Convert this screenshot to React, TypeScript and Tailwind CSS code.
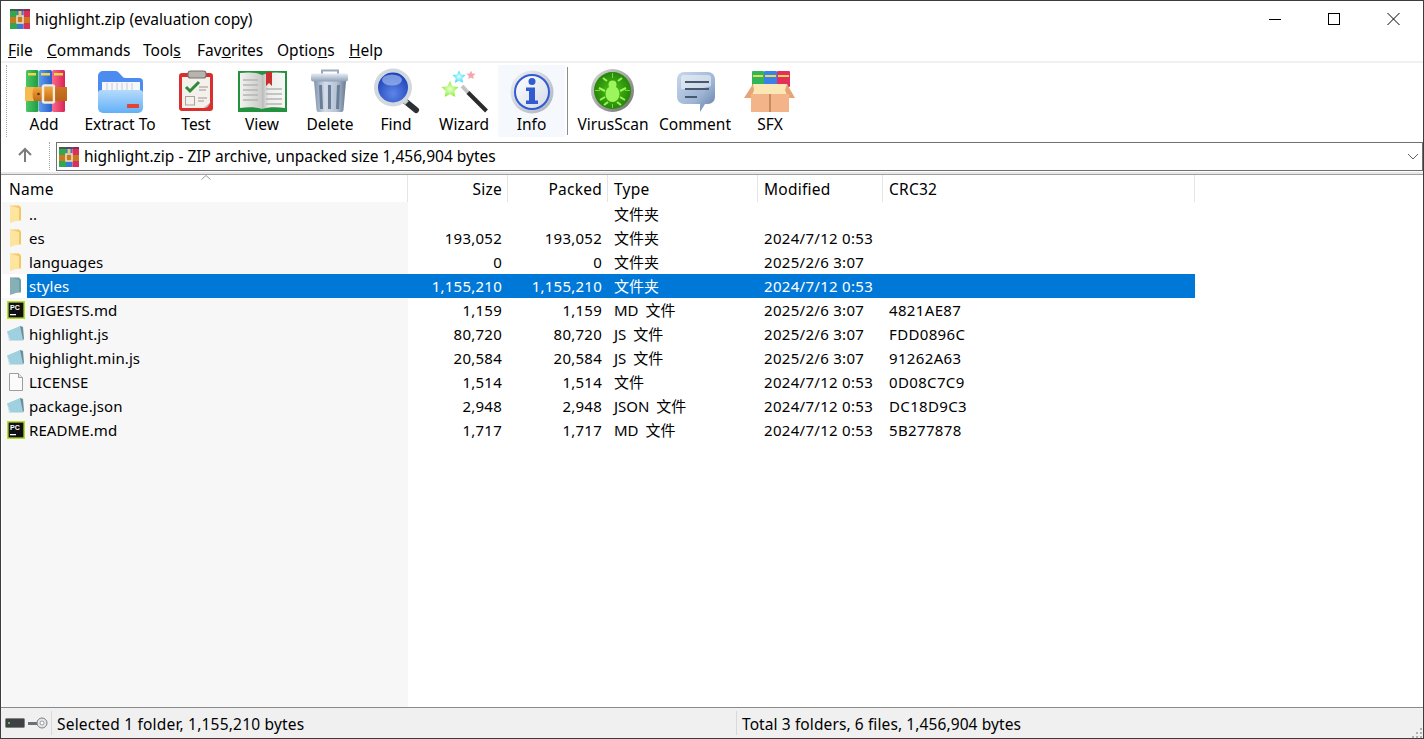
import type { ReactNode } from "react";

const font = "font-['Noto_Sans','Noto_Sans_CJK_SC',sans-serif]";

function Rar({ size = 20 }: { size?: number }) {
  return (
    <svg width={size} height={size} viewBox="0 0 20 20">
      <rect x="0" y="0" width="7" height="20" fill="#2fa84f" />
      <rect x="7" y="0" width="6.5" height="20" fill="#3b78d8" />
      <rect x="13.5" y="0" width="6.5" height="20" fill="#d8315b" />
      <rect x="0" y="0" width="20" height="2" fill="#5b2b3a" opacity="0.6" />
      <rect x="0" y="8" width="20" height="6" fill="#c9781f" />
      <rect x="7" y="7" width="6" height="7" fill="none" stroke="#f2e2c0" strokeWidth="1.5" />
      <rect x="8.5" y="2" width="3" height="5" fill="#e9c66a" />
    </svg>
  );
}

function AddIcon() {
  return (
    <>
      <defs>
        <linearGradient id="addG" x1="0" x2="1">
          <stop offset="0" stopColor="#4cc765" />
          <stop offset="1" stopColor="#1f9a45" />
        </linearGradient>
        <linearGradient id="addB" x1="0" x2="1">
          <stop offset="0" stopColor="#5d9cf0" />
          <stop offset="1" stopColor="#2a5fc9" />
        </linearGradient>
        <linearGradient id="addP" x1="0" x2="1">
          <stop offset="0" stopColor="#f76a8c" />
          <stop offset="1" stopColor="#d92452" />
        </linearGradient>
        <linearGradient id="addBelt" x1="0" x2="0" y1="0" y2="1">
          <stop offset="0" stopColor="#f3a83a" />
          <stop offset="1" stopColor="#c56a14" />
        </linearGradient>
      </defs>
      <rect x="8" y="3" width="12.5" height="42" rx="1.5" fill="url(#addG)" />
      <rect x="21" y="3" width="13" height="42" rx="1.5" fill="url(#addB)" />
      <rect x="34" y="3" width="13" height="42" rx="1.5" fill="url(#addP)" />
      <rect x="10" y="6" width="8" height="2.5" fill="#f0d84a" />
      <rect x="23" y="6" width="9" height="2.5" fill="#f0d84a" />
      <rect x="36" y="6" width="9" height="2.5" fill="#f0d84a" />
      <rect x="7" y="20" width="42" height="14" rx="1" fill="url(#addBelt)" />
      <path d="M7 20h9c-2 4-2 10 0 14H7z" fill="#f6bb4f" />
      <rect x="25" y="18.5" width="11" height="17" rx="1.5" fill="none" stroke="#f3ecdc" strokeWidth="2.5" />
      <circle cx="20.5" cy="27" r="1.3" fill="#5b3410" />
      <rect x="37" y="20" width="12" height="14" fill="#b9601a" opacity="0.7" />
    </>
  );
}

function ExtractIcon() {
  return (
    <>
      <defs>
        <linearGradient id="extF" x1="0" x2="0" y1="0" y2="1">
          <stop offset="0" stopColor="#b5dafb" />
          <stop offset="1" stopColor="#62b0f7" />
        </linearGradient>
      </defs>
      <path d="M4 9a5 5 0 0 1 5-5h12c3 0 4 2 6 4s2 3 5 3h13a4 4 0 0 1 4 4v22H4z" fill="#4c8bf0" />
      <rect x="8" y="15" width="38" height="11" fill="#f5f7fb" />
      <path d="M13 16v8M18 16v8M23 16v8M28 16v8M33 16v8M38 16v8" stroke="#c4ccd8" strokeWidth="1" />
      <path d="M4 26c0-2 1-3 4-3h37c3 0 4 1 4 3v15a5 5 0 0 1-5 5H9a5 5 0 0 1-5-5z" fill="url(#extF)" />
      <rect x="33" y="37" width="12" height="4" rx="0.5" fill="#e2442f" />
    </>
  );
}

function TestIcon() {
  return (
    <>
      <rect x="9" y="6" width="34" height="38" rx="3" fill="#d9302f" />
      <path d="M12 10h28v26l-6 5H12z" fill="#f4f1ec" />
      <path d="M34 41l6-5c-1 3-3 5-6 5z" fill="#c9c4bd" />
      <rect x="18" y="4" width="18" height="7" rx="2.5" fill="#b7b4b0" stroke="#77716c" strokeWidth="1.2" />
      <path d="M16 20l4 4 9-9" fill="none" stroke="#2e8a38" strokeWidth="3" />
      <rect x="15.5" y="29.5" width="9" height="8.5" fill="#f4f1ec" stroke="#a9a39c" />
      <path d="M29 20h9M29 23h7M28 31h9M28 34h6" stroke="#9c9690" strokeWidth="1.2" />
    </>
  );
}

function ViewIcon() {
  return (
    <>
      <defs>
        <linearGradient id="viewL" x1="0" x2="1">
          <stop offset="0" stopColor="#f2f2f0" />
          <stop offset="1" stopColor="#c9c9c7" />
        </linearGradient>
        <linearGradient id="viewR" x1="0" x2="1">
          <stop offset="0" stopColor="#b8b8b6" />
          <stop offset="0.3" stopColor="#ededeb" />
          <stop offset="1" stopColor="#f6f6f4" />
        </linearGradient>
      </defs>
      <rect x="2" y="4" width="49" height="41" fill="#23913d" />
      <path d="M4 6c8-1 16-1 22 2v34c-6-2-14-2-22-1z" fill="url(#viewL)" />
      <path d="M26 8c6-3 14-3 23-2v35c-8-1-17-1-23 1z" fill="url(#viewR)" />
      <path d="M7 13h15M7 18h15M7 23h15M7 28h15M7 33h15M30 22h16M30 27h16M30 32h16M30 37h16" stroke="#b5b5b3" strokeWidth="1.5" />
      <path d="M30 5h6v14l-3-3-3 3z" fill="#c9302c" />
    </>
  );
}

function DeleteIcon() {
  return (
    <>
      <defs>
        <linearGradient id="delB" x1="0" x2="1">
          <stop offset="0" stopColor="#7f93ad" />
          <stop offset="0.35" stopColor="#d4dde8" />
          <stop offset="0.7" stopColor="#b5c3d4" />
          <stop offset="1" stopColor="#66788f" />
        </linearGradient>
        <linearGradient id="delL" x1="0" x2="0" y1="0" y2="1">
          <stop offset="0" stopColor="#e7edf4" />
          <stop offset="1" stopColor="#8da0b8" />
        </linearGradient>
      </defs>
      <path d="M18 7V3.5h16V7" fill="none" stroke="#9aa9bb" strokeWidth="2" />
      <path d="M10 14h32l-2.5 29a2 2 0 0 1-2 2h-23a2 2 0 0 1-2-2z" fill="url(#delB)" />
      <path d="M16.5 18l1 24M25.500 18v24M34.5 18l-1 24" stroke="#6b7e97" strokeWidth="3" />
      <rect x="7" y="6.5" width="37" height="8" rx="2" fill="url(#delL)" />
    </>
  );
}

function FindIcon() {
  return (
    <>
      <defs>
        <radialGradient id="findB" cx="0.5" cy="0.7" r="0.7">
          <stop offset="0" stopColor="#5d86e8" />
          <stop offset="1" stopColor="#1a3fb5" />
        </radialGradient>
      </defs>
      <path d="M35 34l11 9" stroke="#2c2f33" strokeWidth="6" strokeLinecap="round" />
      <path d="M33 32l4 4" stroke="#c6cad0" strokeWidth="5" />
      <circle cx="23" cy="20.500" r="19" fill="#d2d8e0" />
      <circle cx="23" cy="20.500" r="15" fill="url(#findB)" />
      <ellipse cx="22" cy="13" rx="10" ry="5.500" fill="#a8c0f3" opacity="0.65" />
    </>
  );
}

function WizardIcon() {
  return (
    <>
      <defs>
        <radialGradient id="wizG">
          <stop offset="0" stopColor="#e8ffd0" />
          <stop offset="1" stopColor="#8ef03a" />
        </radialGradient>
        <radialGradient id="wizC">
          <stop offset="0" stopColor="#e6fdff" />
          <stop offset="1" stopColor="#33dcf5" />
        </radialGradient>
      </defs>
      <path d="M33 3.500l1.300 3 3.200.3-2.400 2.100.7 3.200-2.800-1.700-2.800 1.700.7-3.200-2.400-2.100 3.200-.3z" fill="#f9a3ac" />
      <path d="M21 3.500l2 4 4.500.6-3.200 3.200.7 4.500-4-2.100-4 2.100.7-4.500-3.200-3.200 4.500-.6z" fill="url(#wizC)" />
      <path d="M12 14l2.600 5.300 5.900.8-4.200 4.100 1 5.800-5.300-2.700-5.300 2.700 1-5.800L3.500 20.100l5.900-.8z" fill="url(#wizG)" />
      <path d="M24 19l6.500 7" stroke="#c2c4c6" strokeWidth="4" />
      <path d="M30 25.500L48.500 44" stroke="#2b2b2b" strokeWidth="4" />
    </>
  );
}

function InfoIcon() {
  return (
    <>
      <defs>
        <linearGradient id="infoS" x1="0" x2="1" y1="0" y2="1">
          <stop offset="0" stopColor="#f2f3f6" />
          <stop offset="1" stopColor="#aab0bb" />
        </linearGradient>
        <linearGradient id="infoI" x1="0" x2="1" y1="0" y2="1">
          <stop offset="0" stopColor="#ffffff" />
          <stop offset="1" stopColor="#d3d9e6" />
        </linearGradient>
      </defs>
      <circle cx="26" cy="25" r="21.500" fill="url(#infoS)" />
      <circle cx="26" cy="25" r="17" fill="url(#infoI)" stroke="#2f5bd3" strokeWidth="2" />
      <circle cx="26" cy="14.500" r="3.500" fill="#2f5bd3" />
      <path d="M20 20.500h9v13h3v3.500H20v-3.500h3v-9.500h-3z" fill="#2f5bd3" />
    </>
  );
}

function VirusIcon() {
  return (
    <>
      <defs>
        <linearGradient id="virS" x1="0" x2="1" y1="0" y2="1">
          <stop offset="0" stopColor="#d9dcd8" />
          <stop offset="1" stopColor="#6b6e6a" />
        </linearGradient>
        <radialGradient id="virG" cx="0.5" cy="0.5" r="0.6">
          <stop offset="0" stopColor="#4cc417" />
          <stop offset="1" stopColor="#1f7a06" />
        </radialGradient>
      </defs>
      <circle cx="25.500" cy="23.500" r="21.500" fill="url(#virS)" />
      <circle cx="25.500" cy="23.500" r="18.500" fill="url(#virG)" />
      <path d="M25.500 6v5M25.500 37v4M8 23.500h5M38 23.500h5" stroke="#6fdc35" strokeWidth="1" />
      <ellipse cx="25.500" cy="27" rx="7" ry="8" fill="#9df55e" />
      <circle cx="25.500" cy="17.500" r="4" fill="#9df55e" />
      <path d="M20 14l-4-3M31 14l4-3M18 24l-6-3M33 24l6-3M18 30l-5 3M33 30l5 3M21 35l-4 3M30 35l4 3" stroke="#9df55e" strokeWidth="2" fill="none" />
    </>
  );
}

function CommentIcon() {
  return (
    <>
      <defs>
        <linearGradient id="comB" x1="0" x2="1" y1="0" y2="1">
          <stop offset="0" stopColor="#c9d8ec" />
          <stop offset="0.6" stopColor="#9db4d4" />
          <stop offset="1" stopColor="#5f7aa3" />
        </linearGradient>
      </defs>
      <path d="M15 5h24a7 7 0 0 1 7 7v18a7 7 0 0 1-7 7h-3l-5 8v-8H15a7 7 0 0 1-7-7V12a7 7 0 0 1 7-7z" fill="url(#comB)" />
      <path d="M12 11c0-2 1-3 3-3h24c2 0 3 1 3 3v8c-10 3-22 4-30 3z" fill="#f4f7fb" opacity="0.55" />
      <path d="M16 15h24M16 22h24M16 30h12" stroke="#48586e" strokeWidth="2" />
    </>
  );
}

function SfxIcon() {
  return (
    <>
      <rect x="8" y="4" width="12" height="16" rx="1" fill="#2fb65a" />
      <rect x="20" y="4" width="13" height="16" rx="1" fill="#3b82e8" />
      <rect x="33" y="4" width="13" height="16" rx="1" fill="#e42f5b" />
      <path d="M9 9h10M21 9h11M34 9h11" stroke="#f0d84a" strokeWidth="2" />
      <path d="M9 17h34l3 13H6z" fill="#fbe7b6" />
      <path d="M9 17L0 31h7l3-8zM43 17l8 14h-7l-3-8z" fill="#e7a476" />
      <rect x="7" y="27" width="38" height="18" fill="#f3b48a" />
      <path d="M26 27v18" stroke="#9c6238" strokeWidth="1" />
    </>
  );
}

function ToolButton({ label, width, active, children }: { label: string; width: string; active?: boolean; children: ReactNode }) {
  return (
    <div className={`flex h-[72px] shrink-0 flex-col items-center ${width} ${active ? "bg-[#f5f9fe]" : ""}`}>
      <svg width="52" height="48" viewBox="0 0 52 48" className="mt-[2px] shrink-0">
        {children}
      </svg>
      <span className="-mt-[1px] whitespace-nowrap text-[15.5px] leading-[20px]">{label}</span>
    </div>
  );
}

function FolderIcon({ muted }: { muted?: boolean }) {
  return (
    <svg width="16" height="18" viewBox="0 0 16 18">
      <path d="M2 0.500h9l2 2v13H2z" fill={muted ? "#6fa0a8" : "#f5c664"} />
      <path d="M2 0.500l9 2.500v12l-9 3z" fill={muted ? "#86b0b6" : "#fde5a0"} />
    </svg>
  );
}

function PcIcon() {
  return (
    <svg width="18" height="18" viewBox="0 0 18 18">
      <rect x="0.800" y="0.800" width="16.400" height="16.400" fill="#111" stroke="#b8dc2a" strokeWidth="1.600" />
      <text x="3" y="9" fontSize="7" fontWeight="700" fill="#fff" fontFamily="Liberation Sans, sans-serif">PC</text>
      <rect x="3" y="13" width="6" height="1.300" fill="#fff" />
    </svg>
  );
}

function ScriptIcon() {
  return (
    <svg width="20" height="18" viewBox="0 0 20 18">
      <path d="M1 6.500L14 1l3 1v13H4z" fill="#9fd0e0" />
      <path d="M14 1l3 1 1 12-1 1z" fill="#6f8c98" />
      <path d="M1 6.500L4 15h13l1 1H3z" fill="#cfdfe6" />
    </svg>
  );
}

function BlankIcon() {
  return (
    <svg width="16" height="18" viewBox="0 0 16 18">
      <path d="M1.500 0.500h9l4 4v13h-13z" fill="#fbfbfb" stroke="#9c9c9c" />
      <path d="M10.500 0.500v4h4" fill="#e8e8e8" stroke="#9c9c9c" />
    </svg>
  );
}

type Row = { name: string; kind: "folder" | "pc" | "script" | "blank"; size: string; packed: string; type: string; modified: string; crc: string; selected?: boolean };

const rows: Row[] = [
  { name: "..", kind: "folder", size: "", packed: "", type: "文件夹", modified: "", crc: "" },
  { name: "es", kind: "folder", size: "193,052", packed: "193,052", type: "文件夹", modified: "2024/7/12 0:53", crc: "" },
  { name: "languages", kind: "folder", size: "0", packed: "0", type: "文件夹", modified: "2025/2/6 3:07", crc: "" },
  { name: "styles", kind: "folder", size: "1,155,210", packed: "1,155,210", type: "文件夹", modified: "2024/7/12 0:53", crc: "", selected: true },
  { name: "DIGESTS.md", kind: "pc", size: "1,159", packed: "1,159", type: "MD 文件", modified: "2025/2/6 3:07", crc: "4821AE87" },
  { name: "highlight.js", kind: "script", size: "80,720", packed: "80,720", type: "JS 文件", modified: "2025/2/6 3:07", crc: "FDD0896C" },
  { name: "highlight.min.js", kind: "script", size: "20,584", packed: "20,584", type: "JS 文件", modified: "2025/2/6 3:07", crc: "91262A63" },
  { name: "LICENSE", kind: "blank", size: "1,514", packed: "1,514", type: "文件", modified: "2024/7/12 0:53", crc: "0D08C7C9" },
  { name: "package.json", kind: "script", size: "2,948", packed: "2,948", type: "JSON 文件", modified: "2024/7/12 0:53", crc: "DC18D9C3" },
  { name: "README.md", kind: "pc", size: "1,717", packed: "1,717", type: "MD 文件", modified: "2024/7/12 0:53", crc: "5B277878" },
];

function RowIcon({ row }: { row: Row }) {
  if (row.kind === "pc") return <PcIcon />;
  if (row.kind === "script") return <ScriptIcon />;
  if (row.kind === "blank") return <BlankIcon />;
  return <FolderIcon muted={row.selected} />;
}

function Menu({ children, className }: { children: ReactNode; className: string }) {
  return <span className={`whitespace-nowrap ${className}`}>{children}</span>;
}

export default function App() {
  return (
    <div className={`flex h-[739px] w-[1424px] flex-col overflow-hidden border border-[#3c3c3c] bg-white text-black ${font}`}>
      {/* title bar */}
      <div className="flex h-[36px] shrink-0 items-center pl-[9px]">
        <Rar />
        <span className="ml-[5px] mt-[2px] text-[15.5px]">highlight.zip (evaluation copy)</span>
        <div className="ml-auto mr-[5px] flex items-center">
          <svg width="60" height="14" viewBox="0 0 60 14">
            <path d="M2 7.500h12" stroke="#000" strokeWidth="1" />
          </svg>
          <svg width="60" height="14" viewBox="0 0 60 14">
            <rect x="1.500" y="1.500" width="11" height="11" fill="none" stroke="#000" />
          </svg>
          <svg width="30" height="14" viewBox="0 0 30 14" className="mr-[1px]">
            <path d="M0.500 1l12 12M12.500 1l-12 12" stroke="#000" />
          </svg>
        </div>
      </div>

      {/* menu bar */}
      <div className="flex h-[24px] shrink-0 items-center pl-[7px] pt-[3px] text-[15.5px]">
        <Menu className="w-[39px]"><u>F</u>ile</Menu>
        <Menu className="w-[96px]"><u>C</u>ommands</Menu>
        <Menu className="w-[54px]">Tool<u>s</u></Menu>
        <Menu className="w-[80px]">Fav<u>o</u>rites</Menu>
        <Menu className="w-[72px]">Optio<u>n</u>s</Menu>
        <Menu className=""><u>H</u>elp</Menu>
      </div>
      <div className="h-[2px] shrink-0 bg-[#f0f0f0]" />

      {/* toolbar */}
      <div className="flex h-[77px] shrink-0 items-start pl-[5px] pt-[2px]">
        <div className="mr-[7px] h-[72px] w-0 border-l border-dotted border-[#a8a8a8]" />
        <ToolButton label="Add" width="w-[60px]"><AddIcon /></ToolButton>
        <ToolButton label="Extract To" width="w-[92px]"><ExtractIcon /></ToolButton>
        <ToolButton label="Test" width="w-[60px]"><TestIcon /></ToolButton>
        <ToolButton label="View" width="w-[72px]"><ViewIcon /></ToolButton>
        <ToolButton label="Delete" width="w-[64px]"><DeleteIcon /></ToolButton>
        <ToolButton label="Find" width="w-[68px]"><FindIcon /></ToolButton>
        <ToolButton label="Wizard" width="w-[68px]"><WizardIcon /></ToolButton>
        <ToolButton label="Info" width="w-[67px]" active><InfoIcon /></ToolButton>
        <div className="ml-[2px] mr-[4px] mt-[2px] h-[68px] w-px bg-[#8c8c8c]" />
        <ToolButton label="VirusScan" width="w-[82px]"><VirusIcon /></ToolButton>
        <ToolButton label="Comment" width="w-[82px]"><CommentIcon /></ToolButton>
        <ToolButton label="SFX" width="w-[68px]"><SfxIcon /></ToolButton>
      </div>

      {/* address bar */}
      <div className="flex h-[32px] shrink-0 items-start bg-white pt-[2px]">
        <svg width="16" height="16" viewBox="0 0 16 16" className="ml-[16px] mt-[5px] shrink-0">
          <path d="M8 15V2M2 8l6-6 6 6" fill="none" stroke="#7b7b7b" strokeWidth="2" />
        </svg>
        <div className="ml-[16px] h-[28px] w-0 border-l border-dotted border-[#a8a8a8]" />
        <div className="ml-[6px] flex h-[29px] min-w-0 flex-1 items-center border border-[#707070] pl-[2px] pr-[3px] text-[15.5px]">
          <Rar size={20} />
          <span className="ml-[5px]">highlight.zip - ZIP archive, unpacked size 1,456,904 bytes</span>
          <svg width="12" height="8" viewBox="0 0 12 8" className="ml-auto">
            <path d="M1 1l5 5 5-5" fill="none" stroke="#606060" />
          </svg>
        </div>
      </div>
      <div className="h-[2px] shrink-0 bg-[#e8e8e8]" />

      {/* file list */}
      <div className="flex min-h-0 flex-1 flex-col border-t border-[#a0a0a0] pl-[1px] text-[15px]">
        <div className="relative flex h-[27px] shrink-0 items-center bg-white text-[15.5px] tracking-[0.25px]">
          <svg width="10" height="5" viewBox="0 0 10 5" className="absolute left-[199px] top-0">
            <path d="M0.500 4.500L5 0.500l4.500 4" fill="none" stroke="#9a9a9a" />
          </svg>
          <div className="flex h-full w-[406px] items-center border-r border-[#e5e5e5] pl-[7px] pt-[2px]">Name</div>
          <div className="flex h-full w-[100px] items-center justify-end border-r border-[#e5e5e5] pr-[5px] pt-[2px]">Size</div>
          <div className="flex h-full w-[100px] items-center justify-end border-r border-[#e5e5e5] pr-[5px] pt-[2px]">Packed</div>
          <div className="flex h-full w-[150px] items-center border-r border-[#e5e5e5] pl-[6px] pt-[2px]">Type</div>
          <div className="flex h-full w-[125px] items-center border-r border-[#e5e5e5] pl-[6px] pt-[2px]">Modified</div>
          <div className="flex h-full w-[312px] items-center border-r border-[#e5e5e5] pl-[6px] pt-[2px]">CRC32</div>
        </div>
        <div className="min-h-0 flex-1 bg-[linear-gradient(to_right,#f7f7f7_406px,#ffffff_406px)]">
          {rows.map((row) => (
            <div key={row.name} className="flex h-[24px] w-[1193px] items-center">
              <div className={`flex h-full w-[25px] shrink-0 items-center justify-center pl-[2px] ${row.selected ? "bg-white" : ""}`}>
                <RowIcon row={row} />
              </div>
              <div className={`flex h-full flex-1 items-center whitespace-nowrap ${row.selected ? "bg-[#0078d7] text-white" : ""}`}>
                <div className="w-[381px] pl-[2px] tracking-[0.1px]">{row.name}</div>
                <div className="w-[100px] pr-[6px] text-right tracking-[0.25px]">{row.size}</div>
                <div className="w-[100px] pr-[6px] text-right tracking-[0.25px]">{row.packed}</div>
                <div className="w-[150px] pl-[6px] [word-spacing:3px]">{row.type}</div>
                <div className="w-[125px] pl-[6px] tracking-[0.3px]">{row.modified}</div>
                <div className="pl-[6px] tracking-[0.35px]">{row.crc}</div>
              </div>
            </div>
          ))}
        </div>
      </div>

      {/* status bar */}
      <div className="flex h-[31px] shrink-0 items-center border-t border-[#8a8a8a] bg-[#f0f0f0] text-[15.5px]">
        <div className="flex h-[24px] w-[51px] shrink-0 items-center gap-[3px] border-r border-[#d9d9d9] pl-[4px]">
          <svg width="20" height="10" viewBox="0 0 20 10">
            <rect x="0.500" y="0.500" width="19" height="9" rx="1" fill="#3e4244" stroke="#7d8284" />
            <rect x="3" y="4" width="2" height="2" fill="#58c04a" />
          </svg>
          <svg width="20" height="12" viewBox="0 0 20 12">
            <path d="M0 5h10v3H0z" fill="#6a6f73" />
            <circle cx="14" cy="6" r="5" fill="#e6e6e6" stroke="#7c8084" />
            <circle cx="14" cy="6" r="2" fill="#fff" stroke="#9a9ea2" />
          </svg>
        </div>
        <div className="h-[24px] w-[685px] shrink-0 border-r border-[#d9d9d9] pl-[5px] pt-[1px] leading-[24px] tracking-[0.2px]">Selected 1 folder, 1,155,210 bytes</div>
        <div className="h-[24px] pl-[5px] pt-[1px] leading-[24px] tracking-[0.1px]">Total 3 folders, 6 files, 1,456,904 bytes</div>
        <svg width="11" height="11" viewBox="0 0 11 11" className="ml-auto mt-auto shrink-0">
          <path d="M8 1h2v2H8zM4 5h2v2H4zM8 5h2v2H8zM0 9h2v2H0zM4 9h2v2H4zM8 9h2v2H8z" fill="#b0b0b0" />
        </svg>
      </div>
    </div>
  );
}
